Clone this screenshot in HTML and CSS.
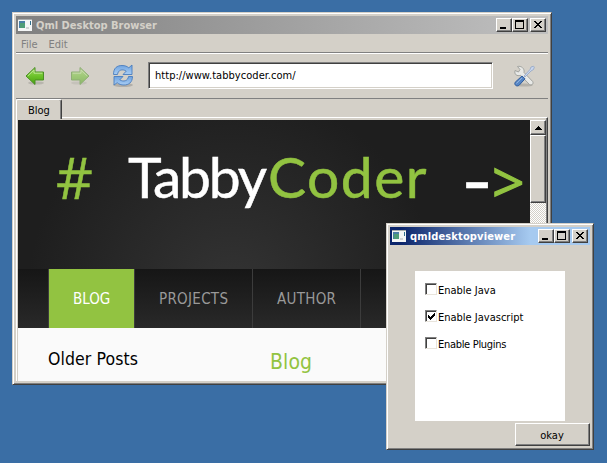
FILE: index.html
```html
<!DOCTYPE html>
<html lang="en">
<head>
<meta charset="utf-8">
<title>Qml Desktop Browser</title>
<link rel="stylesheet" href="styles.css">
</head>
<body>
<svg width="0" height="0" class="defs">
  <defs>
    <linearGradient id="green" x1="0" y1="0" x2="0" y2="1"><stop offset="0" stop-color="#a6dc6a"/><stop offset=".5" stop-color="#6cc32a"/><stop offset="1" stop-color="#48a00e"/></linearGradient>
    <linearGradient id="blue" x1="0" y1="0" x2="0" y2="1"><stop offset="0" stop-color="#6fa3e0"/><stop offset="1" stop-color="#a9cdf3"/></linearGradient>
    <symbol id="app" viewBox="0 0 14 12"><path fill="#f4f6f6" d="M0 0h14v12H0z"/><path fill="#a9adad" d="M0 0h14v1H0z"/><path fill="#4a7fa5" d="M1 2h6v7H1z"/><path fill="#4f9d78" d="M2 4h5v5H2z"/><path fill="#d2d4d6" d="M8 8h3v2H8z"/><path fill="#2f6f8e" d="M12 2h1v4h-1z"/></symbol>
    <symbol id="min" viewBox="0 0 16 14"><path d="M4 9h6v2H4z"/></symbol>
    <symbol id="max" viewBox="0 0 16 14"><path fill-rule="evenodd" d="M3 2h9v9H3zM4 4v6h7V4z"/></symbol>
    <symbol id="close" viewBox="0 0 16 14"><path d="M4 3h2v1h1v1h2V4h1V3h2v1h-1v1h-1v1H9v1h1v1h1v1h1v1h-2V9H9V8H7v1H6v1H4V9h1V8h1V7h1V6H6V5H5V4H4z"/></symbol>
  </defs>
</svg>

<main class="window browser">
  <header class="titlebar inactive">
    <svg class="app-icon"><use href="#app"/></svg>
    <h1 class="title">Qml Desktop Browser</h1>
    <div class="controls">
      <span class="ctl"><svg><use href="#min"/></svg></span>
      <span class="ctl"><svg><use href="#max"/></svg></span>
      <span class="ctl close"><svg><use href="#close"/></svg></span>
    </div>
  </header>
  <nav class="menubar"><span class="m-file">File</span><span class="m-edit">Edit</span></nav>
  <div class="toolbar">
    <svg class="tool back" viewBox="0 0 20 20"><ellipse cx="11" cy="17" rx="8" ry="1.6" fill="#000" opacity=".13"/><path d="M1 10 10 1.500V6h8.500v8H10v4.500z" fill="url(#green)" stroke="#4a8f25"/><path d="M2.800 10 9 4v3.200h8.300" fill="none" stroke="#b9e58f"/></svg>
    <svg class="tool forward" viewBox="0 0 20 20"><ellipse cx="9" cy="17" rx="8" ry="1.6" fill="#000" opacity=".13"/><path d="M19 10 10 1.500V6H1.500v8H10v4.500z" fill="url(#green)" stroke="#4a8f25"/><path d="M17.200 10 11 4v3.200H2.700" fill="none" stroke="#b9e58f"/></svg>
    <svg class="tool reload" viewBox="0 0 22 24"><ellipse cx="11" cy="21" rx="10" ry="2" fill="#000" opacity=".16"/><g fill="url(#blue)" stroke="#4a7dbd" stroke-width=".9"><path d="M1.500 10.500C1.500 4 5 1.500 10 1.500c3 0 5 .8 6.800 2.300L20 1v9.500h-9l3.200-3.300C10.500 4.500 6 6 5.500 10.500z"/><path d="M20.500 12.500c0 6-4 8.500-8.500 8.500-3 0-5-.8-6.800-2.300L2 21v-8.500h9L7.800 15.800c3.700 2.500 8.200 1 8.700-3.300z"/></g></svg>
    <div class="address">http://www.tabbycoder.com/</div>
    <svg class="tool settings" viewBox="0 0 22 22"><ellipse cx="11" cy="20" rx="9" ry="1.600" fill="#000" opacity=".15"/><path d="M4.500 1.500 7 4.500 5.500 7 2 5.500c-1 4 2 6 5.500 4.800l9 9.200c2.500 1.200 4.300-.8 3.200-3L11 7.500C12 3.500 8 .5 4.500 1.500z" fill="#e8e9e7" stroke="#9b9d9a" stroke-width=".9"/><path d="m11 11 6-6.500 1-2.500 2.500-.8.8.9L20.500 4.500 18 6l-6 6z" fill="#c8d6ee" stroke="#92a4c4" stroke-width=".8"/><path d="m9 11 3 2.800-5.800 6.400c-2.600 2-5.400-.5-4-3z" fill="#5585c5" stroke="#2f5c9d"/><path d="m8.800 13-5.500 5.500" stroke="#9cbce5"/></svg>
  </div>
  <div class="tabs"><div class="tab">Blog</div></div>
  <div class="pane">
    <article class="page">
      <div class="banner"><span class="b-hash">#</span><span class="b-tabby">Tabby</span><span class="b-coder">Coder</span><span class="b-dash">-</span><span class="b-gt">&gt;</span></div>
      <nav class="sitenav"><a class="on"><span>BLOG</span></a><a class="projects"><span>PROJECTS</span></a><a class="author"><span>AUTHOR</span></a></nav>
      <div class="columns"><h2 class="older">Older Posts</h2><h2 class="blog">Blog</h2></div>
    </article>
    <div class="scrollbar">
      <div class="sb-up"><svg viewBox="0 0 7 4"><path d="M3 0h1v1h1v1h1v1h1v1H0V3h1V2h1V1h1z"/></svg></div>
      <div class="sb-thumb"></div>
    </div>
  </div>
</main>

<section class="window dialog">
  <header class="titlebar active">
    <svg class="app-icon"><use href="#app"/></svg>
    <h1 class="title">qmldesktopviewer</h1>
    <div class="controls">
      <span class="ctl"><svg><use href="#min"/></svg></span>
      <span class="ctl"><svg><use href="#max"/></svg></span>
      <span class="ctl close"><svg><use href="#close"/></svg></span>
    </div>
  </header>
  <div class="options">
    <div class="option"><i class="box"></i><span class="o-java">Enable Java</span></div>
    <div class="option"><i class="box"><svg viewBox="0 0 7 7"><path d="M0 2h1v1h1v1h1V3h1V2h1V1h1V0h1v3H6v1H5v1H4v1H3v1H2V6H1V5H0z"/></svg></i><span class="o-script">Enable Javascript</span></div>
    <div class="option"><i class="box"></i><span class="o-plug">Enable Plugins</span></div>
  </div>
  <div class="okay"><span>okay</span></div>
</section>
</body>
</html>
```
FILE: styles.css
```css
* { box-sizing: border-box; }
body {
  margin: 0; width: 607px; height: 463px; overflow: hidden;
  background: #3a6ea5; color: #000;
  font: 11px/14px "DejaVu Sans Condensed", "DejaVu Sans", sans-serif;
  font-stretch: condensed;
}
span, h1, h2 { white-space: pre; }
.defs { position: absolute; }

/* windows sit freely on the desktop */
.window {
  position: absolute; background: #d4d0c8; padding: 3px;
  border: 1px solid; border-color: #d4d0c8 #404040 #404040 #d4d0c8;
  box-shadow: inset 1px 1px #fff, inset -1px -1px #808080;
  display: flex; flex-direction: column;
}
.browser { left: 12px; top: 12px; width: 540px; height: 373px; }
.dialog { left: 386px; top: 223px; width: 208px; height: 227px; }

.titlebar { height: 18px; flex: none; display: flex; align-items: center; padding: 0 2px; }
.inactive { background: linear-gradient(90deg, #808080, #c0c0c0); color: #d4d0c8; }
.active { background: linear-gradient(90deg, #0a246a 5%, #a6caf0 70%); color: #fff; }
.app-icon { width: 14px; height: 12px; flex: none; }
.title { margin: 2px 0 0 4px; font-size: 11px; line-height: 14px; font-weight: bold; }
.active .title { letter-spacing: .14px; }
.controls { margin-left: auto; display: flex; }
.ctl, .sb-up, .sb-thumb, .okay {
  background: #d4d0c8; border: 1px solid; border-color: #fff #404040 #404040 #fff;
  box-shadow: inset -1px -1px #808080;
}
.ctl { width: 16px; height: 14px; display: block; }
.ctl svg { display: block; width: 16px; height: 14px; margin: -1px; }
.ctl.close { margin-left: 2px; }

.menubar { height: 20px; flex: none; padding: 4px 0 0 5px; display: flex; gap: 11px; color: #808080; border-bottom: 1px solid #fff; box-shadow: inset 0 -1px #808080; }
.toolbar { height: 45px; flex: none; display: flex; align-items: center; padding-left: 9px; border-bottom: 1px solid #808080; }
.tool { flex: none; display: block; }
.back, .forward { width: 20px; height: 20px; }
.forward { margin-left: 25px; opacity: .5; }
.reload { width: 22px; height: 24px; margin: -1px 0 0 22px; }
.settings { width: 22px; height: 22px; margin-left: 20px; }
.address {
  width: 345px; height: 27px; flex: none; margin: -1px 0 0 14px; padding: 4px 6px; background: #fff;
  border: 1px solid; border-color: #808080 #fff #fff #808080;
  box-shadow: inset 1px 1px #404040, inset -1px -1px #d4d0c8; line-height: 18px; letter-spacing: .04px;
}

.tabs { height: 18px; flex: none; }
.tab { width: 46px; height: 20px; padding: 4px 0 0 11px; background: #d4d0c8; border-left: 1px solid #fff; border-top: 1px solid #fff; border-right: 1px solid #404040; border-radius: 2px 2px 0 0; box-shadow: inset -1px 0 #808080; position: relative; z-index: 1; }
.pane { flex: 1; min-height: 0; display: flex; border-top: 1px solid #fff; border-left: 1px solid #fff; border-right: 1px solid #404040; padding: 2px 0 0 1px; box-shadow: inset -1px 0 #808080; }
.page { width: 512px; flex: none; display: flex; flex-direction: column; overflow: hidden; background: #fafafa; }

.banner {
  height: 149px; flex: none; display: flex; padding-left: 38px;
  background: radial-gradient(circle 205px at 214px 175px, #343434, #1e1e1e);
  font: 57px/112px Lato, sans-serif; color: #fff;
}
.banner span { flex: none; width: 0; -webkit-text-stroke: .5px; }
.b-hash, .b-coder, .b-gt { color: #92c341; }
.banner .b-hash { width: 72px; font-family: "Open Sans", sans-serif; line-height: 114px; }
.banner .b-tabby { width: 140px; letter-spacing: -2.2px; }
.banner .b-coder { width: 194px; letter-spacing: 1.5px; }
.banner .b-dash { width: 30px; font-weight: bold; font-size: 54px; line-height: 122px; transform: scaleX(1.5); transform-origin: 0 0; }
.banner .b-gt { font-family: "Open Sans", sans-serif; line-height: 122px; -webkit-text-stroke: 1.2px; }

.sitenav { height: 59px; flex: none; display: flex; padding-left: 30px; background: linear-gradient(#161616, #292929); font-size: 15px; line-height: 60px; letter-spacing: .3px; color: #999; }
.sitenav a { border-right: 1px solid #3c3c3c; padding-left: 24px; }
.sitenav .on { width: 87px; background: #92c341; color: #fff; border-left: 1px solid #3c3c3c; letter-spacing: 0; }
.projects { width: 118px; }
.author { width: 108px; }
.columns { flex: 1; display: flex; padding-left: 30px; }
.columns h2 { margin: 0; font-weight: normal; }
.older { width: 222px; font-size: 17.5px; line-height: 62px; letter-spacing: .1px; }
.blog { font-size: 21px; line-height: 68px; letter-spacing: .1px; color: #92c341; }

.scrollbar { width: 16px; flex: none; background: repeating-conic-gradient(#fff 0 25%, #d4d0c8 0 50%) 0 0 / 2px 2px; }
.sb-up { height: 15px; display: flex; justify-content: center; padding-top: 5px; }
.sb-up svg { width: 7px; height: 4px; }
.sb-thumb { height: 68px; }

.options { width: 150px; height: 150px; flex: none; margin: 26px 0 0 25px; padding: 12px 0 0 10px; background: #fff; }
.option { height: 27px; display: flex; }
.option span { padding-top: 1px; }
.o-plug { letter-spacing: -.3px; }
.box { width: 12px; height: 12px; flex: none; margin-right: 1px; border: 1px solid; border-color: #808080 #e8e4dc #e8e4dc #808080; box-shadow: inset 1px 1px #404040; padding: 2px; }
.box svg { display: block; width: 7px; height: 7px; }
.okay { width: 75px; height: 23px; margin: 2px 0 0 auto; text-align: center; line-height: 23px; padding-right: 1px; }
```
